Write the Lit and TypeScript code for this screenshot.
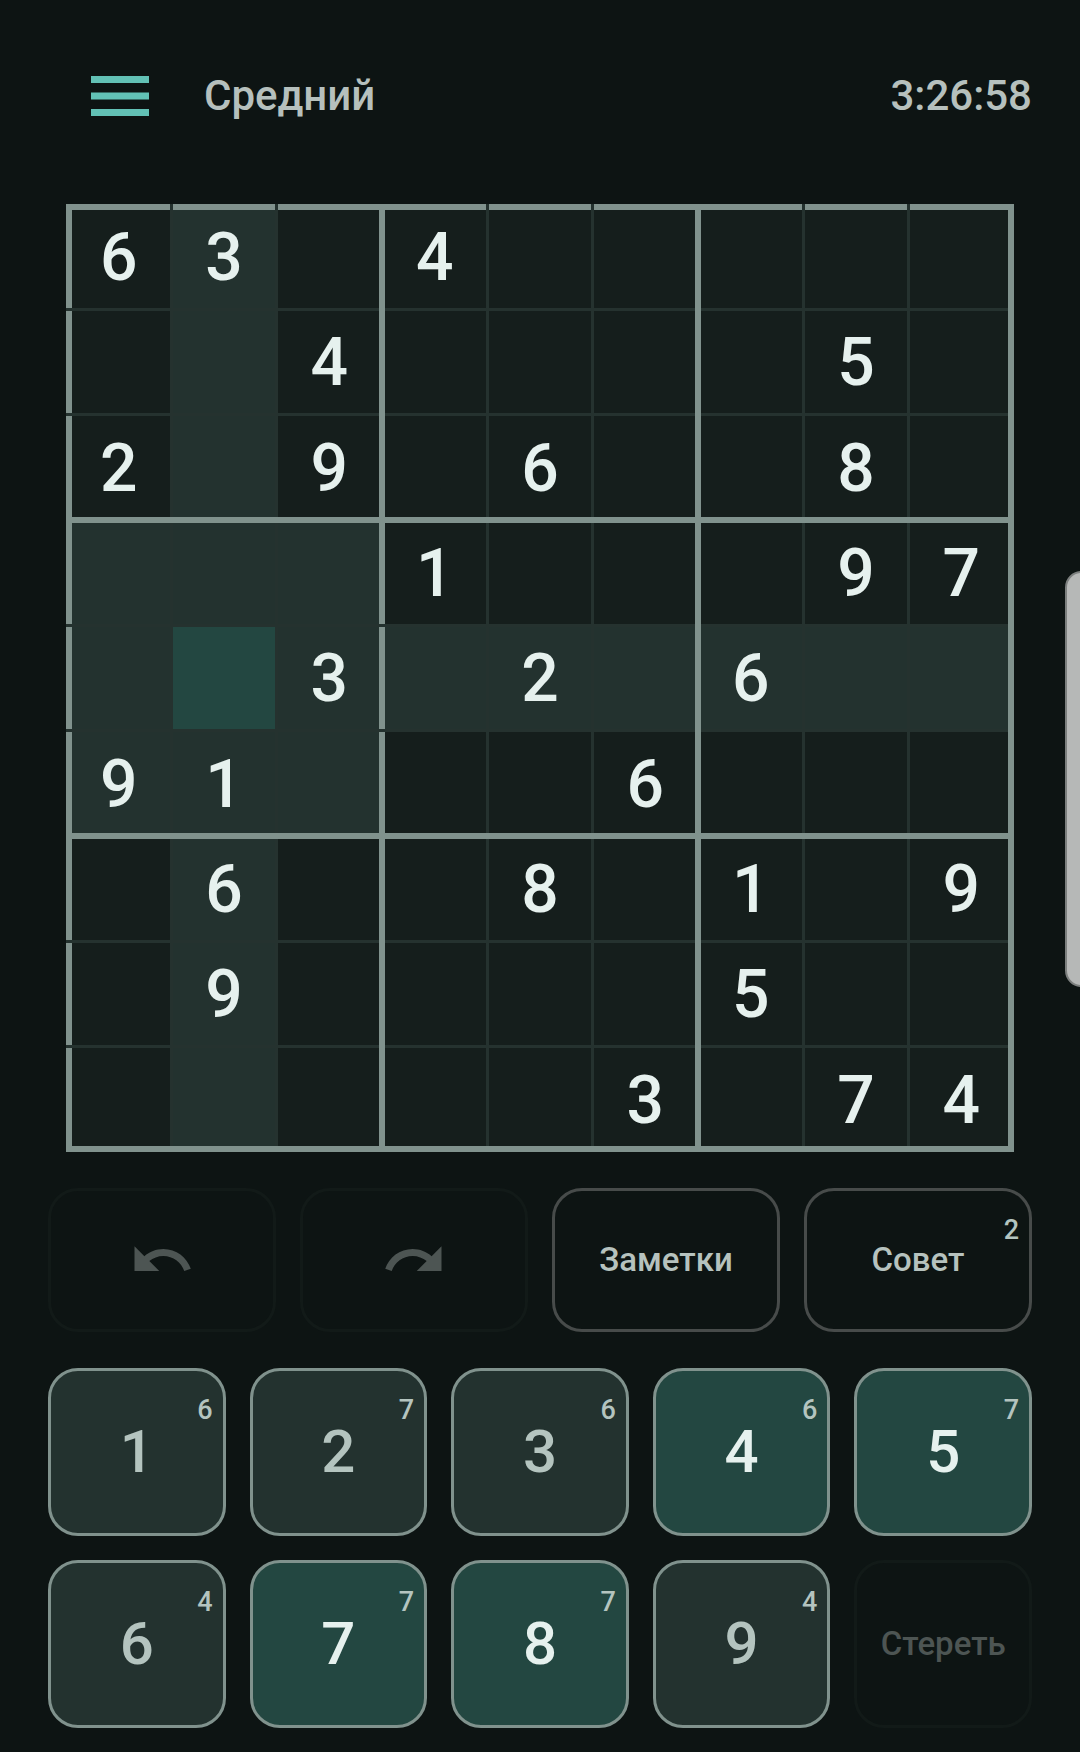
import { LitElement, html, svg, css, nothing } from "lit";
import { customElement, property, state } from "lit/decorators.js";
import { classMap } from "lit/directives/class-map.js";

const PUZZLE = [
  "63.4.....",
  "..4....5.",
  "2.9.6..8.",
  "...1...97",
  "..3.2.6..",
  "91...6...",
  ".6..8.1.9",
  ".9....5..",
  ".....3.74",
];

const KEYS = [
  { digit: 1, left: 6, fits: false },
  { digit: 2, left: 7, fits: false },
  { digit: 3, left: 6, fits: false },
  { digit: 4, left: 6, fits: true },
  { digit: 5, left: 7, fits: true },
  { digit: 6, left: 4, fits: false },
  { digit: 7, left: 7, fits: true },
  { digit: 8, left: 7, fits: true },
  { digit: 9, left: 4, fits: false },
];

const THIN = [104, 209, 420, 525, 736, 841];
const THICK = [0, 313, 629, 942];

@customElement("sudoku-board")
class SudokuBoard extends LitElement {
  @property({ attribute: false }) rows: string[] = [];
  @state() private row = 4;
  @state() private col = 1;

  static styles = css`
    :host {
      display: block;
      position: relative;
    }
    .cells {
      display: grid;
      grid-template-columns: repeat(9, 1fr);
      grid-template-rows: repeat(9, 1fr);
      aspect-ratio: 1;
    }
    .cell {
      min-width: 0;
      min-height: 0;
      padding: 3px 0 0;
      border: 0;
      background: #151e1c;
      color: #e6f1ee;
      font: 500 66px/72px Roboto, "Liberation Sans", sans-serif;
      cursor: pointer;
    }
    .cell.related {
      background: #23322f;
    }
    .cell.selected {
      background: #234741;
    }
    .lines {
      position: absolute;
      inset: 0;
      width: 100%;
      height: 100%;
      pointer-events: none;
      shape-rendering: crispEdges;
    }
    .thin {
      fill: #25322f;
    }
    .thick {
      fill: #80928d;
    }
    .notch {
      fill: #23312e;
    }
  `;

  private related(r: number, c: number) {
    const box = (n: number) => Math.floor(n / 3);
    return (
      r === this.row ||
      c === this.col ||
      (box(r) === box(this.row) && box(c) === box(this.col))
    );
  }

  render() {
    return html`
      <div class="cells">
        ${this.rows.map((line, r) =>
          [...line].map((ch, c) => {
            const selected = r === this.row && c === this.col;
            return html`<button
              type="button"
              class=${classMap({ cell: true, related: this.related(r, c), selected })}
              aria-label=${ch === "." ? `${r + 1}, ${c + 1}` : nothing}
              @click=${() => {
                this.row = r;
                this.col = c;
              }}
            >${ch === "." ? nothing : ch}</button>`;
          })
        )}
      </div>
      <svg class="lines" viewBox="0 0 948 948" aria-hidden="true">
        ${THIN.map(
          (p) => svg`
            <rect class="thin" x=${p} y="0" width="3" height="948"/>
            <rect class="thin" x="0" y=${p} width="948" height="3"/>`
        )}
        ${THICK.map(
          (p) => svg`
            <rect class="thick" x=${p} y="0" width="6" height="948"/>
            <rect class="thick" x="0" y=${p} width="948" height="6"/>`
        )}
        ${THIN.map(
          (p) => svg`
            <rect class="notch" x=${p} y="0" width="3" height="6"/>
            <rect class="notch" x="0" y=${p} width="6" height="3"/>`
        )}
        <rect class="notch" x="313" y="420" width="6" height="3"/>
        <rect class="notch" x="313" y="525" width="6" height="3"/>
      </svg>
    `;
  }
}

@customElement("pad-button")
class PadButton extends LitElement {
  @property() kind = "tool";
  @property() badge = "";
  @property() label = "";
  @property({ type: Boolean }) disabled = false;

  static styles = css`
    :host {
      display: grid;
    }
    .button {
      position: relative;
      display: flex;
      align-items: center;
      justify-content: center;
      min-width: 0;
      padding: 0;
      border: 3px solid #474b4a;
      border-radius: 30px;
      background: transparent;
      color: #b6c2be;
      font: 500 33px/40px Roboto, "Liberation Sans", sans-serif;
      cursor: pointer;
    }
    .button:disabled {
      border-color: #121a18;
      color: #4d5553;
      cursor: default;
    }
    .digit,
    .fits {
      border-color: #80928d;
      background: #23322f;
      color: #b4c4bf;
      font-size: 60px;
      line-height: 72px;
    }
    .fits {
      background: #234741;
      color: #e6f1ee;
    }
    .badge {
      position: absolute;
      top: 23px;
      right: 10px;
      color: #b4c4bf;
      font-size: 27px;
      line-height: 32px;
    }
  `;

  render() {
    return html`<button
      type="button"
      class="button ${this.kind}"
      ?disabled=${this.disabled}
      aria-label=${this.label || nothing}
    ><slot></slot>${this.badge ? html`<span class="badge">${this.badge}</span>` : nothing}</button>`;
  }
}

@customElement("app-root")
class AppRoot extends LitElement {
  static styles = css`
    :host {
      display: block;
      position: relative;
      overflow: hidden;
      min-height: 100vh;
      box-sizing: border-box;
      padding: 60px 48px 24px;
      background: #0d1413;
      color: #b6c0bd;
      font-family: Roboto, "Liberation Sans", sans-serif;
    }
    .header {
      display: flex;
      align-items: center;
      height: 72px;
      font-size: 42px;
      font-weight: 500;
      line-height: 48px;
    }
    .menu {
      display: flex;
      margin: 0 31px 0 19px;
      padding: 16px 24px;
      border: 0;
      background: none;
      color: #62c1b5;
      cursor: pointer;
    }
    .title {
      flex: 1;
      margin: 0;
      font: inherit;
    }
    .board {
      margin: 72px 18px 36px;
    }
    .tools,
    .keys {
      display: grid;
      gap: 24px;
    }
    .tools {
      grid-template-columns: repeat(4, 1fr);
      grid-auto-rows: 144px;
      margin-bottom: 36px;
    }
    .keys {
      grid-template-columns: repeat(5, 1fr);
      grid-auto-rows: 168px;
    }
    .handle {
      position: absolute;
      top: 571px;
      right: -18px;
      width: 33px;
      height: 416px;
      box-sizing: border-box;
      border: 2px solid #7c7f7e;
      border-radius: 17px;
      background: #b6b8b7;
    }
    .icon {
      display: block;
      fill: currentColor;
    }
  `;

  render() {
    return html`
      <header class="header">
        <button class="menu" type="button" aria-label="Меню">
          <svg class="icon" width="58" height="40" viewBox="0 0 58 40">
            <path d="M0 0h58v7H0zM0 16.5h58v7H0zM0 33h58v7H0z" />
          </svg>
        </button>
        <h1 class="title">Средний</h1>
        <time>3:26:58</time>
      </header>
      <sudoku-board class="board" .rows=${PUZZLE}></sudoku-board>
      <div class="tools">
        <pad-button label="Отменить" disabled>
          <svg class="icon" width="66" height="66" viewBox="0 0 24 24">
            <path d="M12.5 8c-2.65 0-5.05.99-6.9 2.6L2 7v9h9l-3.62-3.62c1.39-1.16 3.16-1.88 5.12-1.88 3.54 0 6.55 2.31 7.6 5.5l2.37-.78C21.08 11.03 17.15 8 12.5 8z" />
          </svg>
        </pad-button>
        <pad-button label="Повторить" disabled>
          <svg class="icon" width="66" height="66" viewBox="0 0 24 24">
            <path d="M18.4 10.6C16.55 8.99 14.15 8 11.5 8c-4.65 0-8.58 3.03-9.96 7.22L3.9 16c1.05-3.19 4.05-5.5 7.6-5.5 1.95 0 3.73.72 5.12 1.88L13 16h9V7l-3.6 3.6z" />
          </svg>
        </pad-button>
        <pad-button>Заметки</pad-button>
        <pad-button badge="2">Совет</pad-button>
      </div>
      <div class="keys">
        ${KEYS.map(
          (k) => html`<pad-button kind=${k.fits ? "fits" : "digit"} badge=${k.left}>${k.digit}</pad-button>`
        )}
        <pad-button disabled>Стереть</pad-button>
      </div>
      <div class="handle"></div>
    `;
  }
}
